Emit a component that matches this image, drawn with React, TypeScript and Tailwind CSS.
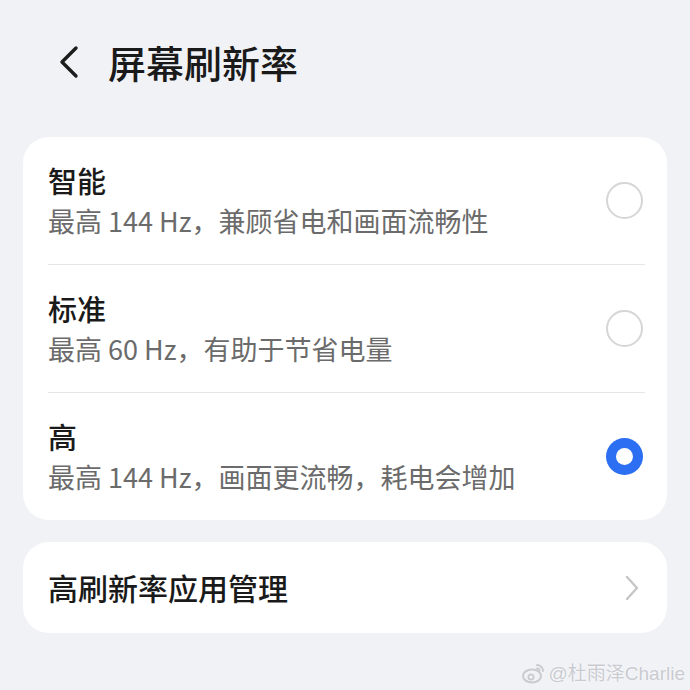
import React from "react";

const options = [
  { title: "智能", desc: "最高 144 Hz，兼顾省电和画面流畅性", selected: false },
  { title: "标准", desc: "最高 60 Hz，有助于节省电量", selected: false },
  { title: "高", desc: "最高 144 Hz，画面更流畅，耗电会增加", selected: true },
];

function Radio({ on }: { on: boolean }) {
  if (on) {
    return (
      <div className="w-[37px] h-[37px] rounded-full bg-[#2c6ff2] flex items-center justify-center shrink-0">
        <div className="w-[17px] h-[17px] rounded-full bg-white" />
      </div>
    );
  }
  return <div className="w-[37px] h-[37px] rounded-full border-[2.5px] border-[#d6d6d6] shrink-0" />;
}

export default function App() {
  return (
    <div
      className="relative w-[690px] h-[690px] bg-[#f1f2f6] px-[23px] overflow-hidden"
      style={{ fontFamily: '"Noto Sans CJK SC", "Noto Sans", sans-serif' }}
    >
      {/* header */}
      <div className="h-[124px] flex items-center">
        <svg className="ml-[34px]" width="24" height="34" viewBox="0 0 24 34" fill="none">
          <path d="M19 3 L5 17 L19 31" stroke="#1c1c1c" strokeWidth="3.4" strokeLinecap="round" strokeLinejoin="round" />
        </svg>
        <h1 className="ml-[27px] text-[38px] font-medium text-[#1a1a1a] leading-none">屏幕刷新率</h1>
      </div>

      {/* options */}
      <div className="mt-[13px] bg-white rounded-[26px]">
        {options.map((o, i) => (
          <div key={o.title}>
            {i > 0 && <div className="ml-[25px] mr-[22px] h-px bg-[#e6e6e8]" />}
            <div className="h-[127px] flex items-center pl-[25px] pr-[24px]">
              <div className="flex-1 flex flex-col gap-[7px]">
                <div className="text-[29px] leading-[34px] font-medium text-[#1a1a1a]">{o.title}</div>
                <div className="text-[27px] leading-[34px] text-[#6b6b6b]">{o.desc}</div>
              </div>
              <Radio on={o.selected} />
            </div>
          </div>
        ))}
      </div>

      {/* app management */}
      <div className="mt-[22px] h-[91px] bg-white rounded-[26px] flex items-center pl-[25px] pr-[28px]">
        <div className="flex-1 text-[30px] font-medium text-[#1a1a1a]">高刷新率应用管理</div>
        <svg width="14" height="26" viewBox="0 0 14 26" fill="none">
          <path d="M2 2 L12 13 L2 24" stroke="#c6c6c8" strokeWidth="2.4" strokeLinecap="round" strokeLinejoin="round" />
        </svg>
      </div>

      {/* watermark */}
      <div className="absolute right-[5px] bottom-[6px] flex items-center gap-[3px] text-[#c9cbd0] text-[19px] leading-none" style={{ textShadow: "0 0 2px #ffffff" }}>
        <svg width="24" height="22" viewBox="0 0 24 22" fill="none">
          <ellipse cx="10" cy="14" rx="9" ry="6.5" stroke="#c9cbd0" strokeWidth="2" />
          <circle cx="9" cy="15" r="2.6" stroke="#c9cbd0" strokeWidth="1.8" />
          <path d="M15 3 A6 6 0 0 1 21 9" stroke="#c9cbd0" strokeWidth="2" strokeLinecap="round" />
          <path d="M15 6.5 A2.6 2.6 0 0 1 17.6 9" stroke="#c9cbd0" strokeWidth="1.8" strokeLinecap="round" />
        </svg>
        <span style={{ fontFamily: '"Liberation Sans", "Noto Sans CJK SC", sans-serif' }}>@杜雨泽Charlie</span>
      </div>
    </div>
  );
}
